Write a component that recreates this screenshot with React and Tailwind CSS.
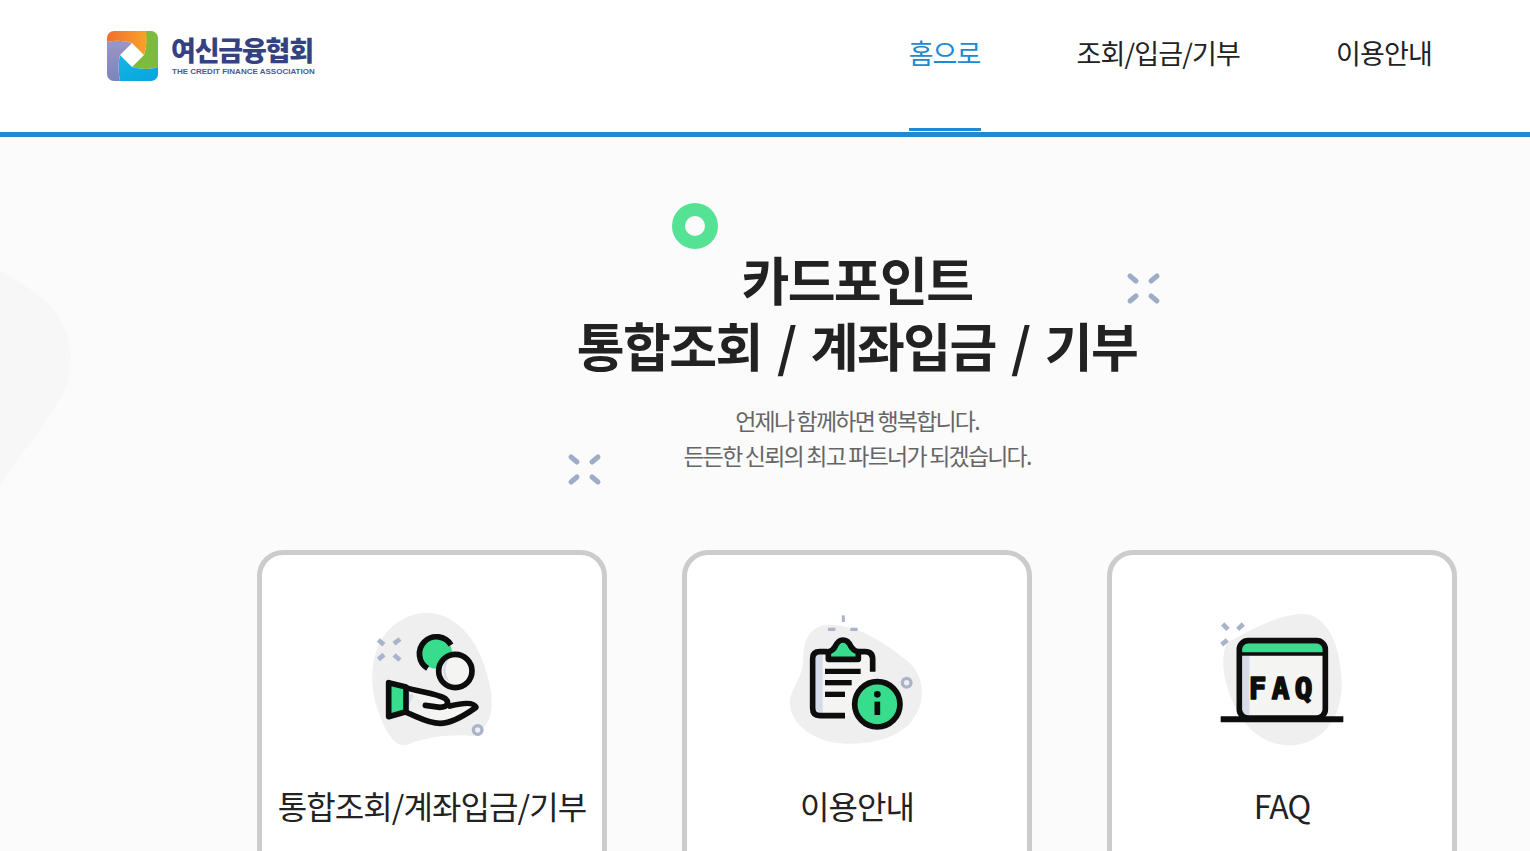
import React from "react";

const FONT = { fontFamily: '"Noto Sans CJK KR", "Noto Sans", sans-serif' };
const INK = "#0d0d0d";
const GREEN = "#37dc8c";
const SPARK = "#a9b4cb";
const PAPER = "#f4f4f2";
const SHADE = "#d5dbe8";

function Logo() {
  return (
    <div className="flex items-center gap-[13px]">
      <svg width="51" height="50" viewBox="0 0 51 50">
        <defs>
          <linearGradient id="lo" x1="0" y1="0" x2="1" y2="0">
            <stop offset="0" stopColor="#ef6f2e" />
            <stop offset="1" stopColor="#f9a229" />
          </linearGradient>
          <linearGradient id="lp" x1="0" y1="0" x2="0" y2="1">
            <stop offset="0" stopColor="#9b96c8" />
            <stop offset="1" stopColor="#7d83ba" />
          </linearGradient>
          <linearGradient id="lb" x1="0" y1="0" x2="1" y2="1">
            <stop offset="0" stopColor="#12b5e6" />
            <stop offset="1" stopColor="#09a4dc" />
          </linearGradient>
          <clipPath id="lc">
            <rect width="51" height="50" rx="7" />
          </clipPath>
        </defs>
        <g clipPath="url(#lc)">
          <rect width="51" height="50" fill="#fff" />
          <path d="M38 0 H51 V36 Q40 40 25 36 L37 24 Q41 12 38 0Z" fill="#7dbb3f" />
          <path d="M0 0 H39 Q41 12 37 24 L25 12 Q12 8 0 11Z" fill="url(#lo)" />
          <path d="M13 24 L25 36 Q40 40 51 36 V50 H13 Q10 36 13 24Z" fill="url(#lb)" />
          <path d="M0 11 Q12 8 25 12 L13 24 Q10 36 13 50 H0Z" fill="url(#lp)" />
        </g>
      </svg>
      <div className="flex flex-col items-start">
        <span className="text-[27px] leading-[29px] font-black tracking-[-1.2px] text-[#34437f]">여신금융협회</span>
        <span
          className="text-[8px] leading-[10px] font-bold tracking-[0px] text-[#4b5a90] ml-[1px] mt-[3px]"
          style={{ fontFamily: '"Liberation Sans", sans-serif' }}
        >
          THE CREDIT FINANCE ASSOCIATION
        </span>
      </div>
    </div>
  );
}

function Sparks({ className }) {
  return (
    <svg className={className} width="36" height="34" viewBox="0 0 36 34" fill="none" stroke="#9dadc6" strokeWidth="5" strokeLinecap="round">
      <path d="M4 5 L10 10" />
      <path d="M31 5 L25 10" />
      <path d="M4 30 L10 25" />
      <path d="M31 30 L25 25" />
    </svg>
  );
}

function HandIcon() {
  return (
    <svg width="170" height="170" viewBox="-9 0 510 510" fill="none" strokeLinejoin="round" strokeLinecap="round">
      <path d="M225 68 C300 65 380 130 410 250 C440 350 425 410 370 438 C310 432 230 440 170 465 C130 475 100 410 80 350 C60 280 60 200 100 140 C130 95 180 70 225 68Z" fill="#efefef" />
      <g stroke={SPARK} strokeWidth="14" strokeLinecap="butt">
        <path d="M85 150 L102 164" />
        <path d="M150 147 L132 161" />
        <path d="M85 208 L102 194" />
        <path d="M132 195 L150 210" />
      </g>
      <circle cx="383" cy="420" r="13" stroke={SPARK} strokeWidth="10" />
      <circle cx="258" cy="188" r="48" fill={GREEN} />
      <path d="M233 235 A51 51 0 1 1 303 165" stroke={INK} strokeWidth="17" strokeLinecap="butt" />
      <circle cx="316" cy="243" r="50" fill={PAPER} stroke={INK} strokeWidth="17" />
      <path d="M300 205 A42 42 0 0 0 305 280 A52 52 0 0 1 300 205Z" fill={SHADE} />
      <path d="M165 292 C205 305 260 310 285 325 C300 338 292 352 270 352 L226 346 M165 366 C195 375 230 400 270 400 C305 400 350 372 378 352 C372 336 340 338 300 348" fill={PAPER} stroke={INK} strokeWidth="17" />
      <path d="M172 310 L190 314 L172 360Z" fill={SHADE} />
      <path d="M116 278 L168 291 L168 365 L116 380Z" fill={GREEN} stroke={INK} strokeWidth="17" />
    </svg>
  );
}

function InfoIcon() {
  return (
    <svg width="170" height="170" viewBox="6 -30 510 510" fill="none" strokeLinejoin="round" strokeLinecap="butt">
      <path d="M170 75 C260 70 350 130 420 190 C470 240 465 320 420 370 C360 430 260 440 180 425 C110 410 60 360 60 310 C60 260 100 240 100 170 C100 110 130 78 170 75Z" fill="#efefef" />
      <g stroke={SPARK} strokeWidth="10">
        <path d="M220 46 V66" strokeWidth="9" />
        <path d="M174 88 H196" />
        <path d="M241 88 H263" />
      </g>
      <circle cx="410" cy="248" r="13" stroke={SPARK} strokeWidth="10" />
      <path d="M150 155 H285 Q308 155 308 178 V347 H150 Q128 347 128 325 V175 Q128 155 150 155Z" fill={PAPER} />
      <path d="M138 165 H158 V340 H150 Q138 335 138 325Z" fill={SHADE} />
      <path d="M225 347 H150 Q128 347 128 325 V175 Q128 155 150 155 H172 M265 155 H285 Q308 155 308 178 V215" stroke={INK} strokeWidth="17" />
      <path d="M175 178 V155 Q190 152 195 140 Q205 120 218 120 Q235 120 243 140 Q250 152 265 155 V178Z" fill={GREEN} stroke={INK} strokeWidth="17" />
      <g stroke={INK} strokeWidth="16">
        <path d="M165 214 H272" />
        <path d="M165 248 H245" />
        <path d="M165 283 H225" />
      </g>
      <circle cx="322" cy="313" r="68" fill={GREEN} stroke={INK} strokeWidth="17" />
      <circle cx="322" cy="283" r="10" fill={INK} />
      <path d="M322 305 V345" stroke={INK} strokeWidth="17" />
    </svg>
  );
}

function FaqIcon() {
  return (
    <svg width="170" height="170" viewBox="-9 -30 510 510" fill="none" strokeLinejoin="round">
      <path d="M310 42 C380 45 420 130 425 240 C430 340 380 420 290 435 C210 445 140 400 100 310 C70 240 60 180 80 130 C130 100 240 40 310 42Z" fill="#efefef" />
      <g stroke={SPARK} strokeWidth="14">
        <path d="M68 72 L84 88" />
        <path d="M130 72 L113 88" />
        <path d="M65 134 L82 120" />
      </g>
      <rect x="118" y="122" width="258" height="232" rx="26" fill={PAPER} />
      <rect x="128" y="168" width="20" height="180" fill={SHADE} />
      <path d="M126 160 V148 Q126 130 144 130 H350 Q368 130 368 148 V160Z" fill={GREEN} />
      <rect x="118" y="122" width="258" height="232" rx="26" stroke={INK} strokeWidth="17" />
      <path d="M118 162 H376" stroke={INK} strokeWidth="11" />
      <path d="M62 358 H430" stroke={INK} strokeWidth="18" />
      <text
        x="250"
        y="298"
        textAnchor="middle"
        fill={INK}
        stroke={INK}
        strokeWidth="5"
        fontSize="88"
        fontWeight="700"
        letterSpacing="16"
        style={{ fontFamily: '"DejaVu Sans Mono", monospace' }}
      >
        FAQ
      </text>
    </svg>
  );
}

const NAV = [
  { label: "홈으로", active: true },
  { label: "조회/입금/기부" },
  { label: "이용안내" },
];

const CARDS = [
  { label: "통합조회/계좌입금/기부", Icon: HandIcon },
  { label: "이용안내", Icon: InfoIcon },
  { label: "FAQ", Icon: FaqIcon },
];

export default function App() {
  return (
    <div className="relative h-screen overflow-hidden bg-[#fbfbfb]" style={FONT}>
      <header className="flex h-[137px] items-start justify-between border-b-[5px] border-[#2189d0] bg-white pl-[107px] pr-[98px]">
        <div className="pt-[31px]">
          <Logo />
        </div>
        <nav className="flex gap-[96px]">
          {NAV.map((item) => (
            <a
              key={item.label}
              className={`block h-[131px] pt-[33px] text-[27px] leading-[40px] tracking-[-0.85px] ${
                item.active ? "border-b-[3px] border-[#2189d0] text-[#2189d0]" : "text-[#222222]"
              }`}
            >
              {item.label}
            </a>
          ))}
        </nav>
      </header>

      {/* faint shape behind the title */}
      <svg className="absolute left-0 top-[265px]" width="75" height="225" viewBox="0 0 75 225">
        <path d="M0 5 C25 20 50 35 60 55 C72 75 75 105 62 130 C45 160 20 190 0 220Z" fill="#f7f7f7" />
      </svg>

      <main className="relative ml-[257px] w-[1200px]">
        <div className="relative flex flex-col items-center pt-[109px]">
          <div className="absolute left-[415px] top-[66px] h-[46px] w-[46px] rounded-full border-[13px] border-[#55e294]" />
          <Sparks className="absolute left-[869px] top-[134px]" />
          <Sparks className="absolute left-[310px] top-[315px]" />
          <h1 className="text-center text-[52px] leading-[66px] font-bold tracking-[-1.6px] [word-spacing:5px] text-[#222222]">
            카드포인트
            <br />
            통합조회 / 계좌입금 / 기부
          </h1>
          <p className="mt-[25px] text-center text-[23px] leading-[35px] tracking-[-1.8px] text-[#666666]">
            언제나 함께하면 행복합니다.
            <br />
            든든한 신뢰의 최고 파트너가 되겠습니다.
          </p>
        </div>

        <div className="mt-[77px] grid grid-cols-3 gap-[75px]">
          {CARDS.map(({ label, Icon }) => (
            <div
              key={label}
              className="flex h-[340px] flex-col items-center rounded-[26px] border-[5px] border-[#cccccc] bg-white pt-[35px]"
            >
              <Icon />
              <div className="mt-[22px] text-[32px] leading-[46px] tracking-[-0.9px] text-[#222222]">{label}</div>
            </div>
          ))}
        </div>
      </main>
    </div>
  );
}
